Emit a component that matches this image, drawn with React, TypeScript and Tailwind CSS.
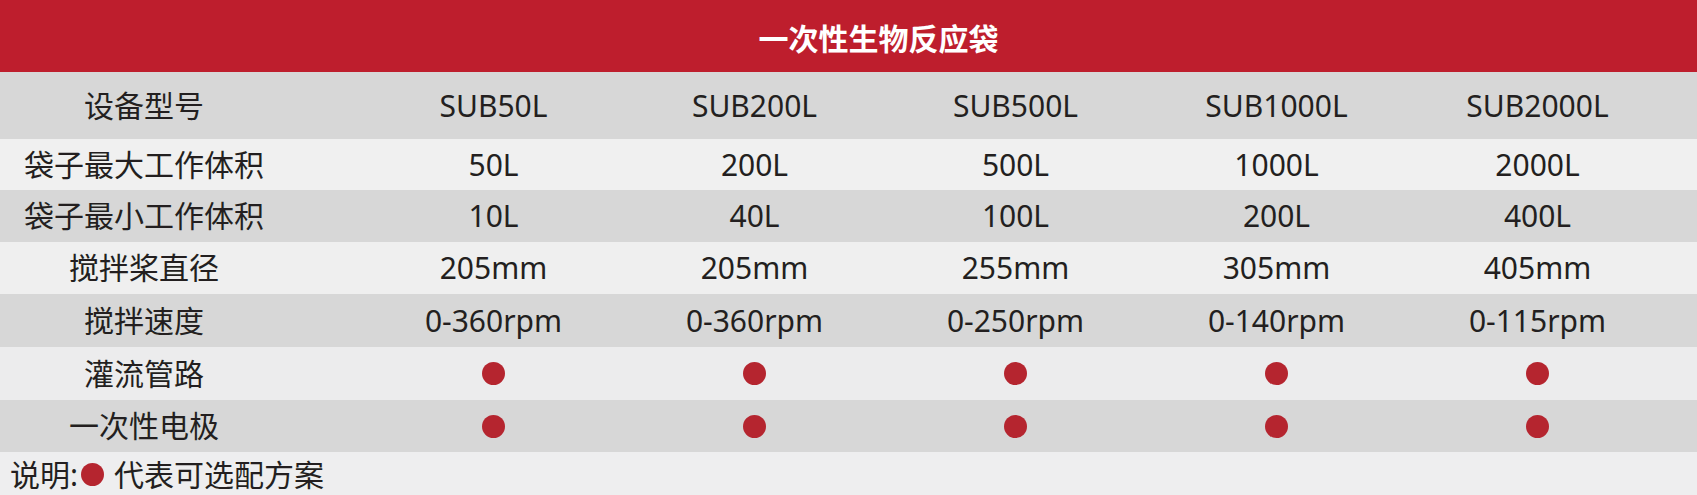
const models = ["SUB50L", "SUB200L", "SUB500L", "SUB1000L", "SUB2000L"]

const rows: { label: string; values: (string | null)[]; h: string; bg: string }[] = [
  { label: "袋子最大工作体积", values: ["50L", "200L", "500L", "1000L", "2000L"], h: "h-[51px]", bg: "bg-[#f0f0f0]" },
  { label: "袋子最小工作体积", values: ["10L", "40L", "100L", "200L", "400L"], h: "h-[52px]", bg: "bg-[#d7d7d7]" },
  { label: "搅拌桨直径", values: ["205mm", "205mm", "255mm", "305mm", "405mm"], h: "h-[52px]", bg: "bg-[#efefef]" },
  { label: "搅拌速度", values: ["0-360rpm", "0-360rpm", "0-250rpm", "0-140rpm", "0-115rpm"], h: "h-[53px]", bg: "bg-[#d7d7d7]" },
  { label: "灌流管路", values: [null, null, null, null, null], h: "h-[53px]", bg: "bg-[#ececed]" },
  { label: "一次性电极", values: [null, null, null, null, null], h: "h-[52px]", bg: "bg-[#d7d7d7]" },
]

function Dot() {
  return <span className="inline-block size-[23px] rounded-full bg-[#b5252f] align-middle" />
}

function Row({ label, values, h, bg }: { label: string; values: (string | null)[]; h: string; bg: string }) {
  return (
    <div className={`flex items-center ${h} ${bg}`}>
      <div className="w-[288px] text-center">{label}</div>
      <div className="ml-[75px] flex">
        {values.map((v, i) => (
          <div key={i} className="flex w-[261px] items-center justify-center">
            {v === null ? <Dot /> : v}
          </div>
        ))}
      </div>
    </div>
  )
}

export default function App() {
  return (
    <div
      className="h-[495px] w-[1697px] overflow-hidden bg-[#ececed] text-[30px] leading-none text-[#231f20]"
      style={{ fontFamily: '"Noto Sans", "Noto Sans CJK SC", sans-serif' }}
    >
      <div className="flex h-[72px] items-center justify-center bg-[#be1e2d] pl-[60px] pt-[6px] text-[30px] font-bold text-white">
        一次性生物反应袋
      </div>

      <Row label="设备型号" values={models} h="h-[67px]" bg="bg-[#d7d7d7]" />
      {rows.map((r) => (
        <Row key={r.label} {...r} />
      ))}

      <div className="flex h-[43px] items-center bg-[#eeeeef] pl-[10px] pt-[2px]">
        <span>说明:</span>
        <span className="ml-[3px] mr-[10px] inline-block size-[23px] rounded-full bg-[#b5252f]" />
        <span>代表可选配方案</span>
      </div>
    </div>
  )
}
